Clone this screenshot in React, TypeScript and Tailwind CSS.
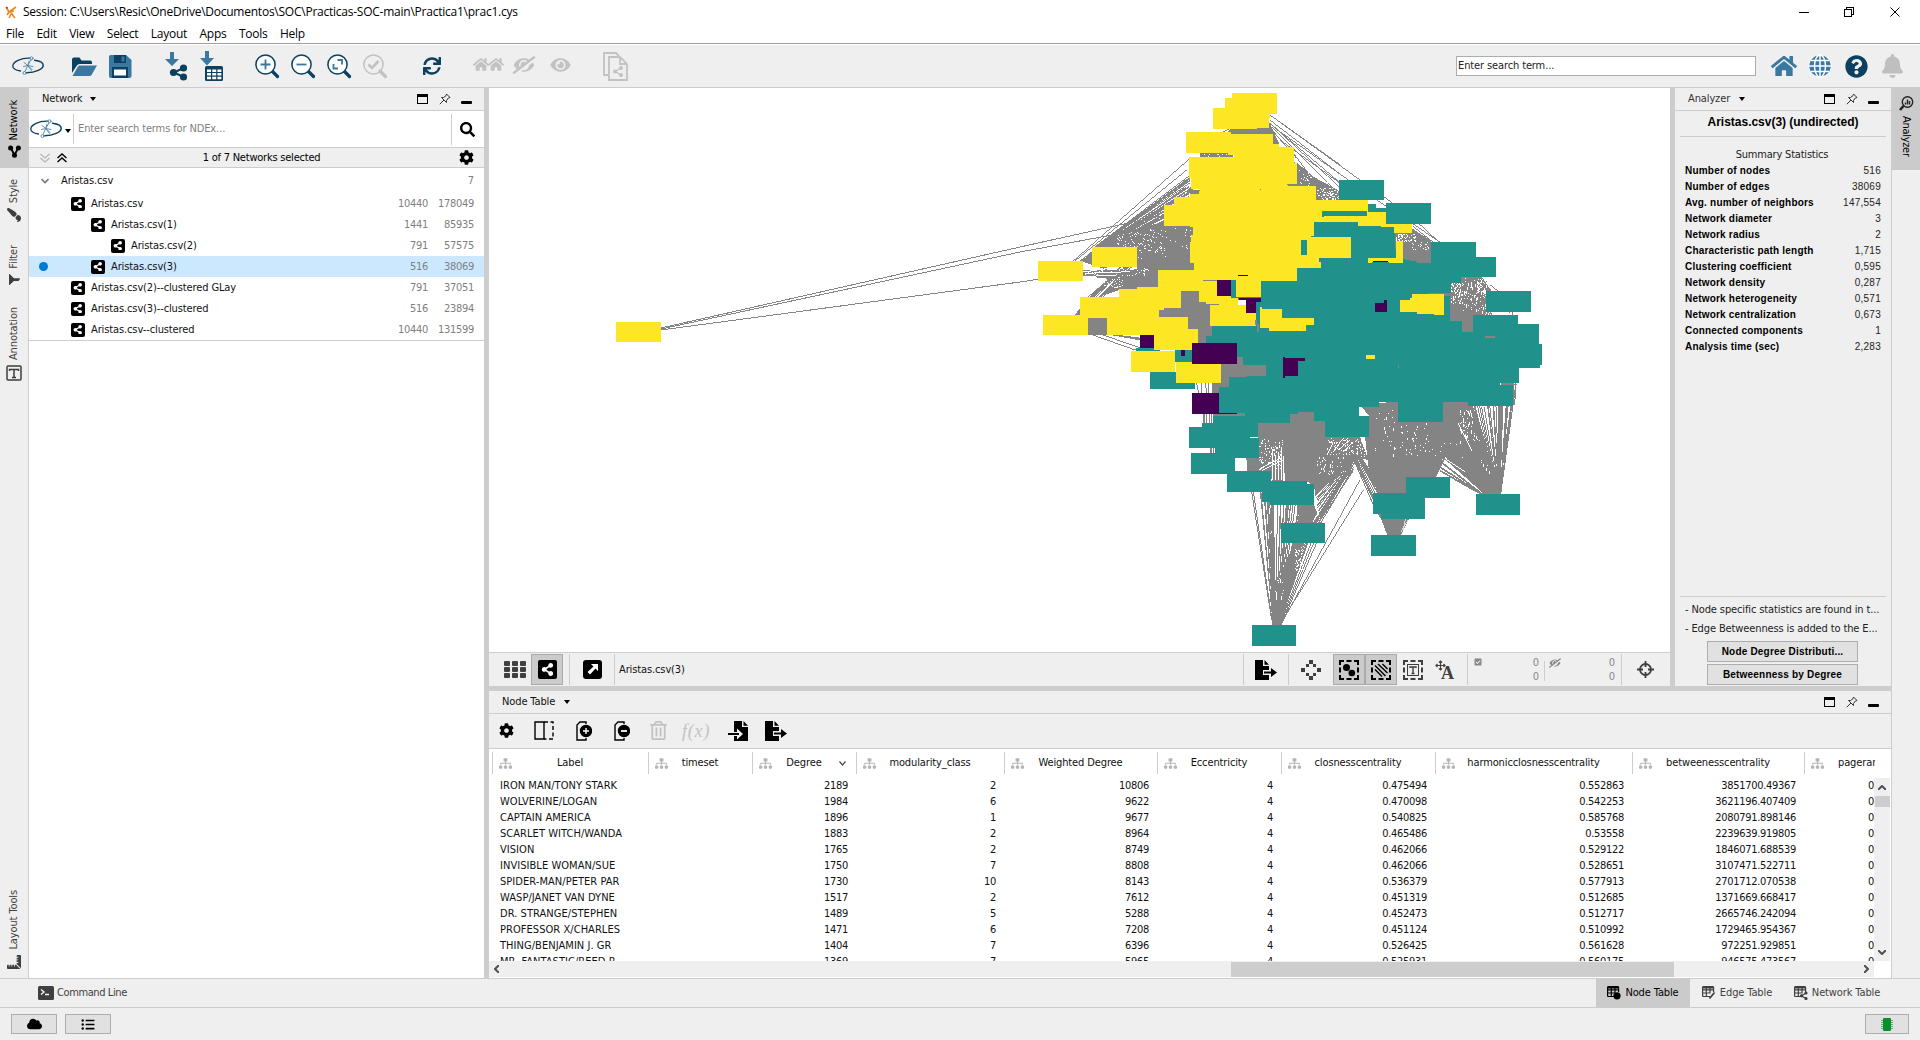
import React from "react";
import {
  FaShareAlt, FaSync, FaHome, FaEyeSlash, FaEye, FaSearch, FaCog, FaPaintBrush, FaFilter,
  FaCloud, FaListUl, FaQuestionCircle, FaBell, FaSitemap, FaRegTrashAlt, FaRulerCombined, FaCheckSquare,
} from "react-icons/fa";

const GRAY = "#848484";
const TEAL = "#21918c";
const YELLOW = "#fde725";
const PURPLE = "#440154";

/* ---------- Network drawing ---------- */

function rng(seed: number) {
  let s = seed;
  return () => {
    s = (s * 1664525 + 1013904223) % 4294967296;
    return s / 4294967296;
  };
}

type FanSpec = { ax: number; ay: number; aw: number; bx0: number; by0: number; bx1: number; by1: number; n: number; seed: number };

function Fan({ ax, ay, aw, bx0, by0, bx1, by1, n, seed }: FanSpec) {
  const r = rng(seed);
  let d = "";
  for (let i = 0; i < n; i++) {
    const t = r();
    const x0 = ax + (t - 0.5) * aw;
    d += `M${x0.toFixed(1)} ${ay}L${(bx0 + (bx1 - bx0) * t).toFixed(1)} ${(by0 + (by1 - by0) * t + (r() - 0.5) * 16).toFixed(1)}`;
  }
  return <path d={d} stroke={GRAY} strokeWidth={3} fill="none" />;
}

function Specks({ x, y, w, h, n, seed, tall = 3, fill = "#fff" }: { x: number; y: number; w: number; h: number; n: number; seed: number; tall?: number; fill?: string }) {
  const r = rng(seed);
  let d = "";
  for (let i = 0; i < n; i++) {
    const px = x + Math.floor((r() * w) / 3) * 3;
    const py = y + Math.floor((r() * h) / 3) * 3;
    const ph = r() > 0.7 ? tall : 3;
    d += `M${px} ${py}h3v${ph}h-3z`;
  }
  return <path d={d} fill={fill} />;
}

const R = (rects: number[][], fill: string) => (
  <path fill={fill} d={rects.map(([x, y, w, h]) => `M${x} ${y}h${w}v${h}h${-w}z`).join("")} />
);

function NetworkGraph() {
  return (
    <svg className="block h-[564px] w-[1181px]" viewBox="489 88 1181 564" shapeRendering="crispEdges">
      {/* long edges towards the isolated node */}
      <path d="M661 328L1020 247L1160 216M661 329L1020 252L1150 228M661 330L1020 282L1080 273" stroke={GRAY} strokeWidth={1} fill="none" />

      {/* upper left part */}
      <g transform="translate(1020 80) scale(.333333)">
        <path d="M160 543L510 235M165 543L500 270" stroke={GRAY} strokeWidth={3} fill="none" />
        <Fan ax={195} ay={545} aw={40} bx0={505} by0={290} bx1={460} by1={470} n={20} seed={5} />
        <Fan ax={250} ay={503} aw={60} bx0={510} by0={285} bx1={500} by1={450} n={36} seed={11} />
        <Fan ax={230} ay={650} aw={50} bx0={270} by0={590} bx1={420} by1={480} n={22} seed={17} />
        <path d="M189 570L420 570L420 610L300 600L189 588z M189 545L216 515V561H260V570z" fill={GRAY} />
        <polygon points="290,500 380,440 522,395 522,575 414,621 297,630 240,650 300,590 350,565 351,500" fill={GRAY} />
        <path d="M624 154L633 144L640 140L750 130L778 192H640z M541 219H640V240H541z M800 240L833 250L880 290L980 345V360H888V320H800z" fill={GRAY} />
        <path d="M750 105L960 254M750 120L960 282M750 130L960 308M756 135L990 350M756 140L960 345M756 150L830 235M640 140L600 160M822 222L880 300" stroke={GRAY} strokeWidth={3} fill="none" />
        <path d="M510 330h33v14h-33z M498 340l20-30v30z M204 714h57v51h-57z M165 704l15-20v20z M204 753l156 20v8z M414 633h165v176h-165z" fill={GRAY} />
        <path d="M204 760L340 808H360V803L204 750" stroke={GRAY} strokeWidth={3} fill="none" />
        <path d="M530 910l6 30M545 910v30M555 910l6 30M565 910v30" stroke={GRAY} strokeWidth={3} />
        <path d="M575 831h163v90h-141v20h-22z" fill={GRAY} />
        <Specks x={350} y={445} w={160} h={95} n={40} seed={23} />
        <Specks x={290} y={460} w={140} h={60} n={80} seed={29} />
        <Specks x={195} y={565} w={200} h={25} n={60} seed={33} />
        <Specks x={250} y={590} w={60} h={35} n={40} seed={35} />
        <Specks x={835} y={270} w={90} h={50} n={30} seed={37} />
        <Specks x={890} y={325} w={75} h={35} n={80} seed={41} />
        <Specks x={550} y={221} w={80} h={8} n={10} seed={43} />
        <path d="M189 576L300 560M195 580L330 575M190 590L290 585" stroke="#fff" strokeWidth={3} />
      </g>

      {/* upper right part */}
      <g transform="translate(1280 80) scale(.333333)">
        <path d="M0 127L240 300M0 155L205 300M0 180L178 308M312 350L340 372M290 360L320 380M400 432L480 487M418 432L478 487M400 440L460 487" stroke={GRAY} strokeWidth={3} fill="none" />
        <path d="M342 459L396 445L453 482V549H342z M510 591H605L640 640V705H699L579 760H510z" fill={GRAY} />
        <path d="M600 590L655 634M605 595L630 640M690 696v10M697 696v10" stroke={GRAY} strokeWidth={3} />
        <Specks x={348} y={462} w={60} h={24} n={65} seed={51} />
        <Specks x={390} y={485} w={60} h={24} n={22} seed={52} />
        <Specks x={513} y={606} w={36} h={66} n={80} seed={53} tall={6} />
        <Specks x={550} y={595} w={70} h={100} n={80} seed={54} tall={9} />
        <Specks x={615} y={696} w={90} h={9} n={40} seed={55} tall={6} />
        <Specks x={590} y={594} w={40} h={40} n={45} seed={56} tall={9} />
        <path d="M700 905L700 975M708 905L704 975M662 912h40" stroke={GRAY} strokeWidth={3} />
      </g>

      {/* lower part */}
      <g transform="translate(1120 380) scale(.333333)">
        <Fan ax={470} ay={735} aw={22} bx0={415} by0={335} bx1={560} by1={360} n={34} seed={61} />
        <Fan ax={474} ay={735} aw={20} bx0={530} by0={420} bx1={620} by1={420} n={26} seed={63} />
        <path d="M478 735L730 330M482 735L720 300M395 335L455 720M400 335L456 720" stroke={GRAY} strokeWidth={3} fill="none" />
        <polygon points="457,735 484,735 515,620 545,489 520,489 480,600 452,600" fill={GRAY} />
        <Specks x={465} y={590} w={30} h={60} n={12} seed={65} tall={12} />
        <Specks x={525} y={495} w={25} h={80} n={35} seed={66} tall={6} />
        <polygon points="414,129 510,102 534,90 582,96 615,123 615,170 650,172 620,225 600,300 582,320 560,303 495,303 487,170 414,180" fill={GRAY} />
        <polygon points="414,170 490,165 490,303 455,303 453,273 375,273 380,234 417,234" fill={GRAY} />
        <Specks x={417} y={176} w={72} h={92} n={95} seed={67} tall={6} />
        <path d="M458 210V300M466 225V300M475 215V300M484 200V300M492 280V303M420 265L480 235M425 272L490 240" stroke="#fff" strokeWidth={3} />
        <path d="M345 234h36v39h-36z" fill="#fff" />
        <path d="M381 234l6 40" stroke={GRAY} strokeWidth={5} />
        <polygon points="620,170 720,170 745,240 712,232 700,238 585,350 582,300" fill={GRAY} />
        <Specks x={620} y={174} w={115} h={58} n={105} seed={69} tall={6} />
        <Specks x={592} y={230} w={75} h={55} n={40} seed={70} tall={6} />
        <path d="M622 225L640 185M640 215L668 176M655 210L690 180M670 215L700 185" stroke="#fff" strokeWidth={3} />
        <Fan ax={702} ay={235} aw={20} bx0={582} by0={315} bx1={600} by1={420} n={24} seed={71} />
        <Fan ax={706} ay={225} aw={24} bx0={756} by0={375} bx1={800} by1={340} n={24} seed={73} />
        <path d="M530 375H582L592 400L575 429H540z" fill={GRAY} />
        <Fan ax={590} ay={429} aw={30} bx0={690} by0={260} bx1={702} by1={270} n={8} seed={74} />
        <polygon points="717,70 1050,60 1080,130 1128,300 1142,342 1092,342 975,230 945,291 858,291 858,339 775,339 745,260 735,170 747,108" fill={GRAY} />
        <path d="M945 291L975 232M975 235L1100 345M968 250L1090 345M962 262L1080 340M960 272L1070 335" stroke={GRAY} strokeWidth={5} fill="none" />
        <Specks x={760} y={90} w={75} h={140} n={24} seed={75} tall={9} />
        <Specks x={840} y={128} w={90} h={100} n={38} seed={77} tall={6} />
        <Specks x={935} y={190} w={95} h={60} n={9} seed={79} />
        <Specks x={1020} y={85} w={80} h={100} n={85} seed={81} tall={9} />
        <Specks x={1080} y={190} w={40} h={90} n={16} seed={82} tall={9} />
        <Fan ax={1137} ay={342} aw={10} bx0={1050} by0={80} bx1={1180} by1={70} n={34} seed={83} />
        <path d="M1142 342L1188 10M1138 330L1182 10M1142 12h50" stroke={GRAY} strokeWidth={3} fill="none" />
        <path d="M1015 130L1055 212M975 235L1035 275" stroke="#fff" strokeWidth={3} />
        <polygon points="773,402 783,416 802,466 843,466 868,416" fill={GRAY} />
        <path d="M848 462L856 416M843 455L864 420" stroke="#fff" strokeWidth={2} />
        <path d="M252 100v30M260 100v30M268 100v30M275 100v30M273 204v16M280 204v16" stroke={GRAY} strokeWidth={4} />
        <path d="M278 99h97v12h-97z M275 0h60v60h-60z" fill={GRAY} />
      </g>

      {/* teal nodes */}
      <g transform="translate(1280 80) scale(.333333)">
        {R([[177, 300, 135, 60], [318, 369, 135, 63], [453, 486, 135, 63], [510, 531, 138, 60], [618, 633, 135, 63], [264, 372, 24, 30], [286, 384, 34, 20], [-147, 600, 30, 60]], TEAL)}
        <polygon
          fill={TEAL}
          points="-57,600 51,560 102,426 342,426 348,534 411,545 411,549 453,549 453,531 543,531 543,609 513,609 513,639 444,639 444,642 492,648 510,648 510,723 546,723 546,756 579,756 579,705 714,705 714,732 777,732 777,792 786,792 786,855 780,855 780,864 717,864 717,909 660,909 660,915 699,915 699,960 -183,960 -183,921 -153,921 -153,891 -99,891 -99,888 -42,888 -42,855 -111,855 -111,831 -222,831 -222,768 -204,768 -204,738 -72,738 -72,654 -126,654 -126,600"
        />
      </g>
      <g transform="translate(1120 380) scale(.333333)">
        <polygon
          fill={TEAL}
          points="327,0 1197,0 1197,9 1141,9 1141,15 1179,15 1179,78 1044,78 1044,66 969,66 969,126 834,126 834,66 777,66 777,81 717,81 717,108 747,108 747,171 615,171 615,123 582,123 582,96 534,96 534,102 510,102 510,129 414,129 414,171 390,171 390,174 417,174 417,234 345,234 345,282 213,282 213,219 285,219 285,204 207,204 207,141 246,141 246,129 279,129 279,108 375,108 375,99 297,99 297,21 327,21"
        />
        {R([[321, 273, 132, 63], [426, 303, 135, 63], [450, 312, 132, 63], [483, 429, 132, 60], [396, 735, 132, 63], [753, 465, 135, 63], [759, 339, 135, 63], [783, 354, 132, 63], [858, 291, 132, 63], [1068, 342, 132, 63]], TEAL)}
      </g>

      {/* yellow nodes and patches */}
      <g transform="translate(1020 80) scale(.333333)">
        {R([[348, 804, 72, 28], [465, 810, 60, 36], [390, 876, 135, 51]], TEAL)}
        {R([[636, 39, 135, 63], [615, 54, 135, 61], [579, 84, 132, 63], [612, 84, 135, 60], [498, 156, 135, 63], [624, 162, 135, 63], [642, 192, 135, 63], [687, 201, 135, 63], [696, 249, 135, 63], [507, 231, 250, 63], [513, 290, 288, 37], [543, 315, 260, 30], [510, 342, 260, 100], [462, 351, 135, 60], [432, 375, 135, 62]], YELLOW)}
        <polygon
          fill={YELLOW}
          points="543,315 888,318 888,360 1044,360 1044,396 1098,396 1098,432 1176,432 1176,459 1122,459 1122,441 1083,441 1083,438 1014,438 1014,426 882,426 882,468 873,468 873,471 993,471 993,534 897,534 897,546 903,546 903,564 831,564 831,603 723,603 723,651 648,651 648,600 591,600 591,648 633,648 633,654 654,654 654,675 708,675 708,738 570,738 570,672 558,672 558,666 537,666 537,633 483,633 483,684 432,684 432,690 417,690 417,711 504,711 504,747 534,747 534,810 402,810 402,765 261,765 261,714 180,714 180,651 297,651 297,627 351,627 351,621 414,621 414,570 522,570 522,549 510,549 510,486 513,486 513,465 519,465 519,441 522,437 522,400"
        />
        {R([[54, 543, 135, 60], [216, 501, 135, 60], [69, 705, 135, 60], [333, 813, 132, 63], [468, 846, 135, 63]], YELLOW)}
        <polygon fill={YELLOW} points="720,681 726,681 726,687 786,687 786,714 882,714 882,735 858,735 858,753 747,753 747,744 720,744" />
        {R([[549, 600, 42, 3], [558, 672, 39, 3], [705, 720, 6, 15], [711, 732, 6, 24], [801, 312, 30, 3], [720, 327, 3, 3]], GRAY)}
        {R([[843, 480, 18, 45], [906, 393, 135, 15], [906, 408, 6, 3]], TEAL)}
        {R([[591, 600, 42, 48], [654, 585, 30, 3], [657, 654, 66, 6], [678, 660, 30, 39], [708, 660, 15, 6], [360, 765, 42, 39], [483, 810, 12, 18], [516, 789, 135, 63], [516, 939, 81, 63], [597, 999, 54, 3]], PURPLE)}
        <polygon fill={PURPLE} points="789,831 795,831 795,834 855,834 855,843 834,843 834,888 795,888 795,894 789,894" />
      </g>
      <g transform="translate(1280 80) scale(.333333)">
        <polygon fill={YELLOW} points="348,483 369,483 369,549 264,549 264,534 348,534" />
        <polygon fill={YELLOW} points="360,660 390,660 390,654 396,654 396,642 492,642 492,705 462,705 462,702 411,702 411,696 360,696" />
        {R([[258, 825, 27, 12]], YELLOW)}
        {R([[276, 546, 51, 3]], TEAL)}
        {R([[615, 768, 30, 5], [354, 855, 3, 9], [444, 639, 66, 3], [492, 642, 18, 6]], GRAY)}
        {R([[285, 669, 36, 27], [312, 660, 9, 9], [279, 543, 45, 3]], PURPLE)}
      </g>
      <rect x={616} y={322} width={45} height={20} fill={YELLOW} />
    </svg>
  );
}

/* ---------- Icons ---------- */

function CyLogo({ className }: { className: string }) {
  return (
    <svg className={className} viewBox="0 0 32 20" fill="none" strokeLinecap="round">
      <path d="M18 2.200C9 1.800 .8 5.600 .8 10c0 2.400 2.900 4.200 7.700 5" stroke="#0b4060" strokeWidth="1.300" />
      <path d="M22.500 4.200c5.200.7 8.700 2.600 8.700 5 0 4-7.700 7.400-16.700 7.600" stroke="#0b4060" strokeWidth="1.500" />
      <g stroke="#4f86a6" strokeWidth=".9">
        <circle cx="19.500" cy="2.300" r="1.500" />
        <circle cx="12.500" cy="17" r="1.500" />
        <path d="M19 4l-3 5-3 6.500M12 6.500l4 3 5 1M11.500 10.500l4.500-1 4 4M17 5l-1 4M19.500 14.500L16 10" />
      </g>
    </svg>
  );
}

function Folder() {
  return (
    <svg className="h-[21px] w-[27px]" viewBox="0 0 27 21">
      <path d="M1 17V3.500Q1 1.500 3 1.500h5.500l2 3H19q2 0 2 2V8H9Q6.500 8 5.500 10z" fill="#0b4060" />
      <path d="M1.500 20L7 10.500Q7.500 9.500 9 9.500h17L20.500 19q-.6 1-2 1z" fill="#3a78a1" />
    </svg>
  );
}

function Floppy() {
  return (
    <svg className="h-[23px] w-[23px]" viewBox="0 0 23 23">
      <path d="M0 1.500Q0 0 1.500 0H17l5.500 5v16q0 2-2 2H2q-2 0-2-2z" fill="#3a78a1" />
      <path d="M5 0h12v8H5z M3 12h16v11H3z" fill="#0b4060" />
      <path d="M12.500 1.500h3v5h-3z" fill="#3a78a1" />
      <path d="M5 14.500h12v6H5z" fill="#fff" />
    </svg>
  );
}

function ImportNet() {
  return (
    <svg className="h-[30px] w-[24px]" viewBox="0 0 24 30">
      <path d="M5 1h4v7h5L7 15 0 8h5z" fill="#3a78a1" />
      <path d="M18.500 17L9 21.500l9.500 4.500" stroke="#0b4060" strokeWidth="2" fill="none" />
      <g fill="#0b4060"><circle cx="18.500" cy="17" r="3.600" /><circle cx="8.500" cy="21.500" r="3.600" /><circle cx="18.500" cy="26" r="3.600" /></g>
    </svg>
  );
}

function ImportTable() {
  return (
    <svg className="h-[30px] w-[24px]" viewBox="0 0 24 30">
      <path d="M5 0h4v7h5l-7 7.500L0 7h5z" fill="#3a78a1" />
      <rect x="5" y="15" width="18" height="15" rx="1.500" fill="#0b4060" />
      <path d="M7 18.500h4v2.500H7z M12.200 18.500h4v2.500h-4z M17.400 18.500h4v2.500h-4z M7 22h4v2.500H7z M12.200 22h4v2.500h-4z M17.400 22h4v2.500h-4z M7 25.700h4v2.500H7z M12.200 25.700h4v2.500h-4z M17.400 25.700h4v2.500h-4z" fill="#fff" />
    </svg>
  );
}

function Zoom({ kind }: { kind: "in" | "out" | "fit" | "sel" }) {
  const off = kind === "sel";
  const c = off ? "#c2c2c2" : "#0b4060";
  const s = off ? "#c2c2c2" : "#3a78a1";
  return (
    <svg className="h-[25px] w-[25px]" viewBox="0 0 25 25" fill="none">
      <path d="M17 17l5.500 5.500" stroke={c} strokeWidth="3.200" strokeLinecap="round" />
      <circle cx="10.500" cy="10.500" r="9.600" stroke={c} strokeWidth="1.500" fill={off ? "none" : "#fff"} />
      {kind === "in" && <path d="M10.500 5.500v10M5.500 10.500h10" stroke={s} strokeWidth="1.800" />}
      {kind === "out" && <path d="M5.500 10.500h10" stroke={s} strokeWidth="1.800" />}
      {kind === "fit" && <path d="M6.500 10v4.500H11M10.500 6H15v4.500" stroke={s} strokeWidth="1.800" />}
      {kind === "sel" && <path d="M5.500 10.500l3.500 3.500 6.500-7" stroke={s} strokeWidth="2.600" />}
    </svg>
  );
}

function DocsNet() {
  return (
    <svg className="h-[29px] w-[26px]" viewBox="0 0 26 29" fill="none" stroke="#c2c2c2" strokeWidth="1.800">
      <path d="M5 23H1V1h12l3 3" />
      <path d="M6 5h11l7 7v16H6z" />
      <path d="M17 5v7h7" />
      <path d="M18 16l-6 3.500 6 3.500" strokeWidth="1.300" />
      <g fill="#c2c2c2" stroke="none"><circle cx="18" cy="16" r="2" /><circle cx="12" cy="19.500" r="2" /><circle cx="18" cy="23" r="2" /></g>
    </svg>
  );
}

function Globe() {
  return (
    <svg className="h-[24px] w-[24px]" viewBox="0 0 24 24">
      <circle cx="12" cy="12" r="11.500" fill="#fff" />
      <circle cx="12" cy="12" r="10.700" fill="#3a78a1" />
      <g stroke="#fff" strokeWidth="1.500" fill="none">
        <path d="M12 1v22M1 12h22M3 6.500h18M3 17.500h18" />
        <ellipse cx="12" cy="12" rx="5.500" ry="11" />
      </g>
    </svg>
  );
}

function PanelButtons() {
  return (
    <div className="flex items-center text-black">
      <div className="h-[10px] w-[11px] border border-t-[3px] border-black" />
      <svg className="ml-[11px] h-[12px] w-[12px]" viewBox="0 0 12 12" fill="none" stroke="#333" strokeWidth="1">
        <path d="M7.500 1L11 4.500 9.300 5 7.500 7.500v2L2.500 4.500h2L7 2.700z M5 7L.8 11.200" />
      </svg>
      <div className="mt-[7px] ml-[10px] h-[3px] w-[11px] rounded-[1px] bg-black" />
    </div>
  );
}

function NetBadge({ className = "h-[14px] w-[14px]" }: { className?: string }) {
  return (
    <span className={`flex items-center justify-center rounded-[2px] bg-black text-white ${className}`}>
      <FaShareAlt className="h-[68%] w-[68%]" />
    </span>
  );
}

function Caret({ className }: { className: string }) {
  return <svg className={className} viewBox="0 0 6 4"><path d="M0 0h6L3 4z" fill="#000" /></svg>;
}

function ExportDoc() {
  return (
    <svg className="h-[20px] w-[22px]" viewBox="0 0 22 20">
      <path d="M0 0h8v6h6v4h-6v5h6v5H0z M9.500 0L14 4.700H9.500z" fill="#000" />
      <path d="M9 11.500h7V8l6 4.500-6 4.500v-3.500H9z" fill="#000" />
    </svg>
  );
}

function ImportDoc() {
  return (
    <svg className="h-[20px] w-[21px]" viewBox="0 0 21 20">
      <path d="M6 0h8v6h6v14H6v-5h3v3.500L15 13 9 7.500V11H6z M15.500 0L20 4.700h-4.500z M0 12h11v2H0z" fill="#000" />
    </svg>
  );
}

function DashedBox({ kind }: { kind: "node" | "edge" | "text" }) {
  const c = kind === "text" ? "#3f3f3f" : "#000";
  return (
    <svg className="h-[20px] w-[20px]" viewBox="0 0 20 20" fill="none" stroke={c}>
      <path d="M1 5V1h4M7.500 1h5M15 1h4v4M19 7.500v5M19 15v4h-4M12.500 19h-5M5 19H1v-4M1 12.500v-5" strokeWidth="2" />
      {kind === "node" && <g fill={c} stroke="none"><circle cx="7.500" cy="7.500" r="3.500" /><circle cx="12.800" cy="13" r="3.300" /></g>}
      {kind === "edge" && <path d="M4 5.500l10.500 10.500M4 9.500l7 7M7 4l9.500 9M11.500 4l5 5" strokeWidth="1.400" />}
      {kind === "text" && <g><rect x="4.500" y="4.500" width="11" height="11" strokeWidth="1" /><path d="M7 8V7h6v1M10 7v6.500M8.500 13.500h3" strokeWidth="1.400" /></g>}
    </svg>
  );
}

function Grid9() {
  return (
    <svg className="h-[17px] w-[22px]" viewBox="0 0 22 17" fill="#3f3f3f">
      {[0, 6, 12].map((y) => [0, 8, 16].map((x) => <rect key={`${x}-${y}`} x={x} y={y} width="6" height="5" rx="1" />))}
    </svg>
  );
}

function TableIcon({ kind }: { kind: "node" | "edge" | "net" }) {
  const c = kind === "node" ? "#000" : "#3f3f3f";
  return (
    <svg className="h-[14px] w-[14px]" viewBox="0 0 14 14" fill="none" stroke={c} strokeWidth="1.200">
      <path d="M8 10.500H1.600Q.6 10.500.6 9.500V1.600q0-1 1-1h9q1 0 1 1V6M.6 3.800h11M.6 7h8M4.300 1v9.500M8 1v6" />
      <path d="M.6 1.500h11" strokeWidth="2" />
      {kind === "node" && <circle cx="10" cy="9.800" r="3.600" fill={c} stroke="none" />}
      {kind === "edge" && <path d="M7.500 12.500l5-6" strokeWidth="1.800" />}
      {kind === "net" && <g fill={c}><path d="M12 7L7.500 9.800 12 12.500" fill="none" /><circle cx="12" cy="7" r="1" /><circle cx="7.500" cy="9.800" r="1" /><circle cx="12" cy="12.500" r="1" /></g>}
    </svg>
  );
}

/* ---------- Data ---------- */

const menus = ["File", "Edit", "View", "Select", "Layout", "Apps", "Tools", "Help"];

const tree = [
  { pad: "pl-[42px]", name: "Aristas.csv", n: "10440", e: "178049" },
  { pad: "pl-[62px]", name: "Aristas.csv(1)", n: "1441", e: "85935" },
  { pad: "pl-[82px]", name: "Aristas.csv(2)", n: "791", e: "57575" },
  { pad: "pl-[62px]", name: "Aristas.csv(3)", n: "516", e: "38069", sel: true },
  { pad: "pl-[42px]", name: "Aristas.csv(2)--clustered GLay", n: "791", e: "37051" },
  { pad: "pl-[42px]", name: "Aristas.csv(3)--clustered", n: "516", e: "23894" },
  { pad: "pl-[42px]", name: "Aristas.csv--clustered", n: "10440", e: "131599" },
];

const stats = [
  ["Number of nodes", "516"], ["Number of edges", "38069"], ["Avg. number of neighbors", "147,554"],
  ["Network diameter", "3"], ["Network radius", "2"], ["Characteristic path length", "1,715"],
  ["Clustering coefficient", "0,595"], ["Network density", "0,287"], ["Network heterogeneity", "0,571"],
  ["Network centralization", "0,673"], ["Connected components", "1"], ["Analysis time (sec)", "2,283"],
];

const cols = [
  { w: "w-[156px]", name: "Label" }, { w: "w-[104px]", name: "timeset" }, { w: "w-[104px]", name: "Degree", sort: true },
  { w: "w-[148px]", name: "modularity_class" }, { w: "w-[153px]", name: "Weighted Degree" }, { w: "w-[124px]", name: "Eccentricity" },
  { w: "w-[154px]", name: "closnesscentrality" }, { w: "w-[197px]", name: "harmonicclosnesscentrality" }, { w: "w-[172px]", name: "betweenesscentrality" },
];

const rows = [
  ["IRON MAN/TONY STARK", "", "2189", "2", "10806", "4", "0.475494", "0.552863", "3851700.49367"],
  ["WOLVERINE/LOGAN", "", "1984", "6", "9622", "4", "0.470098", "0.542253", "3621196.407409"],
  ["CAPTAIN AMERICA", "", "1896", "1", "9677", "4", "0.540825", "0.585768", "2080791.898146"],
  ["SCARLET WITCH/WANDA", "", "1883", "2", "8964", "4", "0.465486", "0.53558", "2239639.919805"],
  ["VISION", "", "1765", "2", "8749", "4", "0.462066", "0.529122", "1846071.688539"],
  ["INVISIBLE WOMAN/SUE", "", "1750", "7", "8808", "4", "0.462066", "0.528651", "3107471.522711"],
  ["SPIDER-MAN/PETER PAR", "", "1730", "10", "8143", "4", "0.536379", "0.577913", "2701712.070538"],
  ["WASP/JANET VAN DYNE", "", "1517", "2", "7612", "4", "0.451319", "0.512685", "1371669.668417"],
  ["DR. STRANGE/STEPHEN", "", "1489", "5", "5288", "4", "0.452473", "0.512717", "2665746.242094"],
  ["PROFESSOR X/CHARLES", "", "1471", "6", "7208", "4", "0.451124", "0.510992", "1729465.954367"],
  ["THING/BENJAMIN J. GR", "", "1404", "7", "6396", "4", "0.526425", "0.561628", "972251.929851"],
  ["MR. FANTASTIC/REED R", "", "1369", "7", "5965", "4", "0.525931", "0.560175", "946575.473567"],
];

/* ---------- Panels ---------- */

function SideTab({ label, className, children }: { label: string; className: string; children: React.ReactNode }) {
  return (
    <div className={`flex w-[28px] flex-col items-center justify-end ${className}`}>
      <span className="mb-[5px] rotate-180 leading-[16px] whitespace-nowrap [writing-mode:vertical-rl]">{label}</span>
      {children}
    </div>
  );
}

function Toolbar() {
  return (
    <div className="flex h-[43px] items-center border-b border-[#cdcdcd] bg-[#efefef]">
      <CyLogo className="ml-[12px] h-[20px] w-[32px]" />
      <div className="ml-[27px]"><Folder /></div>
      <div className="ml-[11px]"><Floppy /></div>
      <div className="ml-[33px]"><ImportNet /></div>
      <div className="ml-[11px]"><ImportTable /></div>
      <div className="ml-[31px] flex gap-[11px]"><Zoom kind="in" /><Zoom kind="out" /><Zoom kind="fit" /><Zoom kind="sel" /></div>
      <FaSync className="ml-[35px] h-[18px] w-[18px] text-[#0b4060]" />
      <div className="ml-[32px] flex text-[#c2c2c2]">
        <FaHome className="h-[15px] w-[16px]" /><FaHome className="-ml-[1px] h-[15px] w-[16px]" />
        <FaEyeSlash className="ml-[8px] h-[18px] w-[24px] -translate-y-[1px] -scale-x-100" />
        <FaEye className="ml-[12px] h-[18px] w-[25px] -translate-y-[1px]" />
      </div>
      <div className="ml-[30px]"><DocsNet /></div>
      <div className="ml-auto flex h-[20px] w-[300px] items-center border border-[#abadb3] bg-white pl-[1px] text-[#222]">Enter search term...</div>
      <FaHome className="ml-[15px] h-[24px] w-[26px] text-[#3a78a1]" />
      <div className="ml-[11px]"><Globe /></div>
      <FaQuestionCircle className="ml-[13px] h-[23px] w-[23px] text-[#0b4060]" />
      <FaBell className="mr-[16px] ml-[13px] h-[24px] w-[23px] text-[#bfbfbf]" />
    </div>
  );
}

function NetworkPanel() {
  return (
    <div className="flex w-[455px] flex-col bg-white">
      <div className="flex h-[23px] items-center justify-between border-b border-[#cdcdcd] bg-[#efefef] pr-[12px] pl-[13px]">
        <div className="flex items-center text-[#111]">Network<Caret className="ml-[8px] h-[4px] w-[6px]" /></div>
        <PanelButtons />
      </div>
      <div className="flex h-[37px] items-center border-b border-[#cdcdcd]">
        <CyLogo className="ml-[1px] h-[20px] w-[32px]" />
        <Caret className="mt-[4px] ml-[3px] h-[4px] w-[6px]" />
        <div className="ml-[2px] h-[30px] w-px bg-[#cdcdcd]" />
        <span className="ml-[4px] text-[#808080]">Enter search terms for NDEx...</span>
        <div className="ml-auto h-[31px] w-px bg-[#cdcdcd]" />
        <FaSearch className="mr-[9px] ml-[8px] h-[15px] w-[15px]" />
      </div>
      <div className="flex h-[20px] items-center border-b border-[#cdcdcd] bg-[#efefef]">
        <svg className="ml-[11px] h-[10px] w-[10px]" viewBox="0 0 10 10" fill="none" stroke="#b5b5b5" strokeWidth="1.300"><path d="M.5 1L5 5l4.500-4M.5 5L5 9l4.500-4" /></svg>
        <svg className="ml-[7px] h-[10px] w-[10px]" viewBox="0 0 10 10" fill="none" stroke="#000" strokeWidth="1.400"><path d="M.5 5L5 1l4.500 4M.5 9L5 5l4.500 4" /></svg>
        <span className="flex-1 pr-[3px] text-center tracking-[-0.22px]">1 of 7 Networks selected</span>
        <FaCog className="mr-[10px] h-[15px] w-[15px]" />
      </div>
      <div className="border-b border-[#cdcdcd]">
        <div className="flex h-[25px] items-center text-[#111]">
          <svg className="ml-[12px] h-[6px] w-[8px]" viewBox="0 0 8 6" fill="none" stroke="#777" strokeWidth="1.600"><path d="M.5 1L4 4.500 7.500 1" /></svg>
          <span className="ml-[12px]">Aristas.csv</span>
          <span className="mr-[10px] ml-auto text-[#808080]">7</span>
        </div>
        {tree.map((t, i) => (
          <div key={i} className={`relative flex h-[21px] items-center text-[#111] ${t.pad} ${t.sel ? "bg-[#cce8ff]" : ""}`}>
            {t.sel && <div className="absolute left-[10px] h-[9px] w-[9px] rounded-full bg-[#0078d7]" />}
            <NetBadge />
            <span className="ml-[6px]">{t.name}</span>
            <span className="ml-auto tracking-[-0.3px] text-[#808080]">{t.n}</span>
            <span className="mr-[10px] w-[46px] text-right tracking-[-0.3px] text-[#808080]">{t.e}</span>
          </div>
        ))}
      </div>
    </div>
  );
}

function ViewToolbar() {
  return (
    <div className="flex h-[34px] items-center border-t border-[#cdcdcd] bg-[#efefef]">
      <div className="ml-[15px]"><Grid9 /></div>
      <div className="ml-[5px] flex h-[31px] w-[32px] items-center justify-center border border-[#ababab] bg-[#cbcbcb]"><NetBadge className="h-[19px] w-[19px]" /></div>
      <div className="ml-[6px] h-[31px] w-px bg-[#cdcdcd]" />
      <svg className="ml-[13px] h-[19px] w-[19px]" viewBox="0 0 19 19"><rect width="19" height="19" rx="3" fill="#000" /><path d="M8 4h7v7l-2.500-2.500-5.500 6-2.500-2.500 6-5.500z" fill="#fff" /></svg>
      <div className="ml-[12px] h-[31px] w-px bg-[#cdcdcd]" />
      <span className="ml-[4px] text-[#111]">Aristas.csv(3)</span>
      <div className="ml-auto h-[31px] w-px bg-[#cdcdcd]" />
      <div className="ml-[11px]"><ExportDoc /></div>
      <div className="ml-[11px] h-[31px] w-px bg-[#cdcdcd]" />
      <svg className="ml-[12px] h-[20px] w-[20px]" viewBox="0 0 20 20" fill="#3f3f3f"><path d="M8 0h4v4H8zM8 16h4v4H8zM0 8h4v4H0zM16 8h4v4h-4zM5 4h3v3H5zM12 4h3v3h-3zM5 13h3v3H5zM12 13h3v3h-3z" /></svg>
      <div className="ml-[12px] flex">
        <div className="flex h-[31px] w-[32px] items-center justify-center border border-[#ababab] bg-[#cbcbcb]"><DashedBox kind="node" /></div>
        <div className="flex h-[31px] w-[32px] items-center justify-center border border-[#ababab] bg-[#cbcbcb]"><DashedBox kind="edge" /></div>
      </div>
      <div className="ml-[6px]"><DashedBox kind="text" /></div>
      <svg className="ml-[12px] h-[20px] w-[20px]" viewBox="0 0 20 20">
        <path d="M5.500 1v9M1 5.500h9M4 2.500L5.500 1 7 2.500M4 8.500L5.500 10 7 8.500M2.500 4L1 5.500 2.500 7M8.500 4L10 5.500 8.500 7" stroke="#3f3f3f" strokeWidth="1.200" fill="none" />
        <text x="6" y="19" fontFamily="Liberation Serif" fontWeight="bold" fontSize="18" fill="#3f3f3f">A</text>
      </svg>
      <div className="ml-[12px] h-[31px] w-px bg-[#cdcdcd]" />
      <div className="ml-[6px] flex h-[28px] text-[#888]">
        <FaCheckSquare className="mt-[2px] h-[8px] w-[8px]" />
        <div className="flex w-[57px] flex-col text-right leading-[14px]"><span>0</span><span>0</span></div>
        <div className="mt-[5px] ml-[5px] h-[20px] w-px bg-[#cdcdcd]" />
        <FaEyeSlash className="mt-[2px] ml-[4px] h-[10px] w-[12px] -scale-x-100" />
        <div className="flex w-[54px] flex-col text-right leading-[14px]"><span>0</span><span>0</span></div>
      </div>
      <div className="ml-[6px] h-[31px] w-px bg-[#cdcdcd]" />
      <svg className="mr-[16px] ml-[15px] h-[17px] w-[17px]" viewBox="0 0 17 17" fill="none" stroke="#3f3f3f" strokeWidth="1.800"><circle cx="8.500" cy="8.500" r="5.500" /><path d="M8.500 0v6M8.500 11v6M0 8.500h6M11 8.500h6" /></svg>
    </div>
  );
}

function Analyzer() {
  return (
    <div className="flex w-[216px] flex-col bg-[#efefef]">
      <div className="flex h-[23px] shrink-0 items-center justify-between border-b border-[#cdcdcd] pr-[12px] pl-[13px]">
        <div className="flex items-center text-[#333]">Analyzer<Caret className="ml-[9px] h-[4px] w-[6px]" /></div>
        <PanelButtons />
      </div>
      <div className="mx-[5px] flex h-[26px] items-center justify-center border-b border-[#cdcdcd] pb-[3px] font-['Liberation_Sans'] text-[12px] font-bold tracking-[-0.02px]">Aristas.csv(3) (undirected)</div>
      <div className="mt-[10px] h-[16px] pr-[2px] text-center leading-[16px] tracking-[-0.2px] text-[#222]">Summary Statistics</div>
      <div className="pr-[10px] pl-[10px] font-['Liberation_Sans'] text-[10px]">
        {stats.map(([k, v]) => (
          <div key={k} className="flex h-[16px] items-center justify-between leading-[16px]"><b className="tracking-[0.2px]">{k}</b><span className="tracking-[0.25px] text-[#222]">{v}</span></div>
        ))}
      </div>
      <div className="mx-[5px] mt-auto border-t border-[#cdcdcd] pt-[3px] pl-[5px] leading-[19px] whitespace-nowrap text-[#222]">
        <div>- Node specific statistics are found in t...</div>
        <div>- Edge Betweenness is added to the E...</div>
      </div>
      <div className="mt-[3px] mb-[1px] ml-[32px] flex w-[151px] flex-col gap-[2px] text-center font-['Liberation_Sans'] text-[10px] font-bold tracking-[0.2px]">
        <div className="h-[21px] border border-[#adadad] bg-[#e1e1e1] leading-[20px]">Node Degree Distributi...</div>
        <div className="h-[21px] border border-[#adadad] bg-[#e1e1e1] leading-[20px]">Betweenness by Degree</div>
      </div>
    </div>
  );
}

function HeaderCell({ w, name, sort }: { w: string; name: string; sort?: boolean }) {
  return (
    <div className={`flex h-[22px] shrink-0 items-center border-l border-[#cdcdcd] pl-[6px] ${w}`}>
      <FaSitemap className="h-[11px] w-[13px] shrink-0 text-[#b5b5b5]" />
      <span className={`flex-1 text-center ${sort ? "pr-[3px]" : "pr-[20px]"}`}>{name}</span>
      {sort && <svg className="mr-[10px] h-[5px] w-[7px]" viewBox="0 0 7 5" fill="none" stroke="#444" strokeWidth="1.200"><path d="M.5.5l3 3.500 3-3.500" /></svg>}
    </div>
  );
}

function NodeTable() {
  return (
    <div className="flex h-[287px] w-[1402px] flex-col bg-white">
      <div className="flex h-[23px] shrink-0 items-center justify-between border-b border-[#cdcdcd] bg-[#efefef] pr-[12px] pl-[13px]">
        <div className="flex items-center text-[#111]">Node Table<Caret className="ml-[9px] h-[4px] w-[6px]" /></div>
        <PanelButtons />
      </div>
      <div className="flex h-[35px] shrink-0 items-center border-b border-[#cdcdcd] bg-[#efefef] pb-[1px]">
        <FaCog className="ml-[10px] h-[15px] w-[15px]" />
        <svg className="ml-[20px] h-[19px] w-[20px]" viewBox="0 0 20 19" fill="none" stroke="#000" strokeWidth="1.400"><path d="M1 1h9v17H1z" /><path d="M10 1h9v17h-9" strokeDasharray="4 2.500" /></svg>
        <svg className="ml-[22px] h-[20px] w-[16px]" viewBox="0 0 16 20" fill="none" stroke="#000" strokeWidth="1.400"><path d="M10 3V1H4L1 4v15h9v-2" /><circle cx="10" cy="10" r="5.500" fill="#000" /><path d="M10 7v6M7 10h6" stroke="#fff" /></svg>
        <svg className="ml-[22px] h-[20px] w-[16px]" viewBox="0 0 16 20" fill="none" stroke="#000" strokeWidth="1.400"><path d="M10 3V1H4L1 4v15h9v-2" /><circle cx="10" cy="10" r="5.500" fill="#000" /><path d="M7 10h6" stroke="#fff" strokeWidth="1.800" /></svg>
        <FaRegTrashAlt className="ml-[20px] h-[19px] w-[17px] text-[#c2c2c2]" />
        <span className="ml-[15px] w-[29px] font-['Liberation_Serif'] text-[18px] tracking-[0.8px] whitespace-nowrap text-[#c2c2c2] italic">f(x)</span>
        <div className="ml-[17px]"><ImportDoc /></div>
        <div className="ml-[16px]"><ExportDoc /></div>
      </div>
      <div className="flex h-[29px] shrink-0 overflow-hidden pt-[3px] pl-[3px] text-[#111]">
        {cols.map((c) => <HeaderCell key={c.name} {...c} />)}
        <div className="flex h-[22px] w-[71px] shrink-0 items-center overflow-hidden border-l border-[#cdcdcd] pl-[6px] whitespace-nowrap">
          <FaSitemap className="h-[11px] w-[13px] shrink-0 text-[#b5b5b5]" /><span className="ml-[14px]">pagerank</span>
        </div>
      </div>
      <div className="flex h-[183px] shrink-0">
        <div className="w-[1385px] overflow-hidden pl-[3px] text-[#111]">
          {rows.map((r) => (
            <div key={r[0]} className="flex h-[16px] leading-[16px] whitespace-nowrap">
              {r.map((v, i) => <div key={i} className={`shrink-0 ${i === 0 ? "pl-[8px] tracking-[0.05px]" : "pr-[8px] text-right tracking-[-0.3px]"} ${cols[i].w}`}>{v}</div>)}
              <div className="shrink-0 pl-[64px]">0.0</div>
            </div>
          ))}
        </div>
        <div className="flex w-[16px] flex-col items-center bg-[#efefef]">
          <svg className="mt-[7px] h-[5px] w-[8px]" viewBox="0 0 8 5" fill="none" stroke="#505050" strokeWidth="2"><path d="M0 5l4-4 4 4" /></svg>
          <div className="mt-[6px] h-[11px] w-[15px] bg-[#cdcdcd]" />
          <svg className="mt-auto mb-[6px] h-[5px] w-[8px]" viewBox="0 0 8 5" fill="none" stroke="#505050" strokeWidth="2"><path d="M0 0l4 4 4-4" /></svg>
        </div>
      </div>
      <div className="flex h-[16px] w-[1385px] items-center bg-[#efefef]">
        <svg className="ml-[5px] h-[8px] w-[5px]" viewBox="0 0 5 8" fill="none" stroke="#505050" strokeWidth="2"><path d="M5 0L1 4l4 4" /></svg>
        <div className="ml-[732px] h-[15px] w-[443px] bg-[#cdcdcd]" />
        <svg className="mr-[5px] ml-auto h-[8px] w-[5px]" viewBox="0 0 5 8" fill="none" stroke="#505050" strokeWidth="2"><path d="M0 0l4 4-4 4" /></svg>
      </div>
    </div>
  );
}

export default function App() {
  return (
    <div className="flex h-[1040px] w-[1920px] flex-col overflow-hidden bg-[#efefef] font-['DejaVu_Sans_Condensed','DejaVu_Sans',sans-serif] text-[11px] leading-[14px] tracking-[-0.12px] text-black [font-stretch:condensed]">
      <div className="bg-white [font-stretch:normal]">
        <div className="flex h-[24px] items-center font-['Open_Sans',sans-serif] text-[12px]">
          <svg className="ml-[5px] h-[13px] w-[12px]" viewBox="0 0 12 13" fill="none" stroke="#ea8a1c" strokeWidth="1.600"><path d="M1 1l3 5 7-5M4 6l-2 3M5 5l4 6 1 1M4 6l5-1M6 8l-2 4" /><circle cx="2" cy="1.800" r="1" fill="#c0392b" stroke="none" /></svg>
          <span className="ml-[6px] tracking-[-0.24px]">Session: C:\Users\Resic\OneDrive\Documentos\SOC\Practicas-SOC-main\Practica1\prac1.cys</span>
          <svg className="mr-[19px] ml-auto h-[10px] w-[102px]" viewBox="0 0 102 10" fill="none" stroke="#000" strokeWidth="1" shapeRendering="crispEdges">
            <path d="M0 5.500h10M45.500 2.500h7v7h-7zM47.500 2.500v-2h7v7h-2" />
            <path d="M91.500.5l9 9M100.500.5l-9 9" shapeRendering="auto" />
          </svg>
        </div>
        <div className="flex h-[19px] items-center gap-[12.5px] pl-[6px] font-['Open_Sans',sans-serif] text-[12px] tracking-[-0.27px]">
          {menus.map((m) => <span key={m}>{m}</span>)}
        </div>
      </div>
      <div className="h-[2px] shrink-0 border-t border-[#a0a0a0] bg-white" />
      <Toolbar />
      <div className="flex h-[890px]">
        <div className="flex w-[29px] flex-col border-r border-[#cdcdcd] text-[#3f3f3f]">
          <SideTab label="Network" className="h-[80px] bg-[#cbcbcb] pb-[10px] text-black">
            <svg className="h-[13px] w-[13px]" viewBox="0 0 13 13"><path d="M2.500 2.500L6.500 10l4-7.500" stroke="#000" strokeWidth="1.800" fill="none" /><circle cx="2.600" cy="3" r="2.500" /><circle cx="10.400" cy="3" r="2.500" /><circle cx="6.500" cy="10.300" r="2.500" /></svg>
          </SideTab>
          <SideTab label="Style" className="h-[65px] pb-[11px]"><FaPaintBrush className="h-[14px] w-[14px] -rotate-90" /></SideTab>
          <SideTab label="Filter" className="h-[63px] pb-[11px]"><FaFilter className="h-[11px] w-[11px] -rotate-90" /></SideTab>
          <SideTab label="Annotation" className="h-[96px] pb-[11px]">
            <svg className="h-[16px] w-[16px]" viewBox="0 0 16 16" fill="none" stroke="#3f3f3f"><rect x="1" y="1" width="14" height="14" rx="1" strokeWidth="1.500" /><path d="M3.500 6V4.500h9V6M8 4.500v8M6 12.500h4" strokeWidth="1.500" /></svg>
          </SideTab>
          <SideTab label="Layout Tools" className="mt-auto h-[100px] pb-[9px]"><FaRulerCombined className="h-[14px] w-[14px] -scale-x-100" /></SideTab>
        </div>
        <NetworkPanel />
        <div className="w-[5px] bg-[#cdcdcd]" />
        <div className="flex w-[1402px] flex-col">
          <div className="flex h-[598px]">
            <div className="flex w-[1181px] flex-col bg-white"><NetworkGraph /><ViewToolbar /></div>
            <div className="w-[5px] bg-[#cdcdcd]" />
            <Analyzer />
          </div>
          <div className="h-[5px] bg-[#cdcdcd]" />
          <NodeTable />
        </div>
        <div className="w-[29px] border-l border-[#cdcdcd]">
          <div className="flex h-[82px] flex-col items-center bg-[#cbcbcb] pt-[8px]">
            <svg className="h-[15px] w-[15px]" viewBox="0 0 15 15" fill="none" stroke="#222"><circle cx="8.500" cy="6" r="5.200" strokeWidth="1.400" /><path d="M4.500 10L1 14" strokeWidth="2.600" /><path d="M6.500 8.500v-2M8.500 8.500V3.500M10.500 8.500V5" strokeWidth="1.400" /></svg>
            <span className="mt-[5px] leading-[16px] tracking-[-0.3px] [writing-mode:vertical-rl]">Analyzer</span>
          </div>
        </div>
      </div>
      <div className="flex h-[30px] items-center justify-between border-y border-[#cdcdcd] text-[#3f3f3f]">
        <div className="flex items-center pl-[38px]">
          <svg className="h-[14px] w-[16px]" viewBox="0 0 16 14"><rect width="16" height="14" rx="1.500" fill="#3f3f3f" /><path d="M3 3.500L6 6 3 8.500M7 8.500h4" stroke="#fff" strokeWidth="1.300" fill="none" /></svg>
          <span className="ml-[3px] tracking-[-0.4px]">Command Line</span>
        </div>
        <div className="flex h-full pr-[28px]">
          <div className="flex w-[94px] items-center justify-center gap-[4px] bg-[#cbcbcb] text-black"><TableIcon kind="node" /><span>Node Table</span></div>
          <div className="flex w-[94px] items-center justify-center gap-[4px]"><TableIcon kind="edge" /><span>Edge Table</span></div>
          <div className="flex w-[108px] items-center justify-center gap-[4px] pr-[2px]"><TableIcon kind="net" /><span>Network Table</span></div>
        </div>
      </div>
      <div className="flex h-[32px] items-center pr-[11px] pl-[11px]">
        <div className="flex h-[20px] w-[46px] items-center justify-center border border-[#adadad] bg-[#e1e1e1]"><FaCloud className="h-[12px] w-[15px]" /></div>
        <div className="ml-[8px] flex h-[20px] w-[46px] items-center justify-center border border-[#adadad] bg-[#e1e1e1]"><FaListUl className="h-[13px] w-[14px]" /></div>
        <div className="ml-auto flex h-[20px] w-[44px] items-center justify-center border border-[#adadad] bg-[#e1e1e1]">
          <svg className="h-[13px] w-[12px]" viewBox="0 0 12 13"><path d="M0 2.500h12M0 4.500h12M0 6.500h12M0 8.500h12M0 10.500h12" stroke="#0a8f2e" strokeWidth="1" opacity=".6" /><rect x="2" width="8" height="13" rx="1" fill="#0a8f2e" /></svg>
        </div>
      </div>
    </div>
  );
}
